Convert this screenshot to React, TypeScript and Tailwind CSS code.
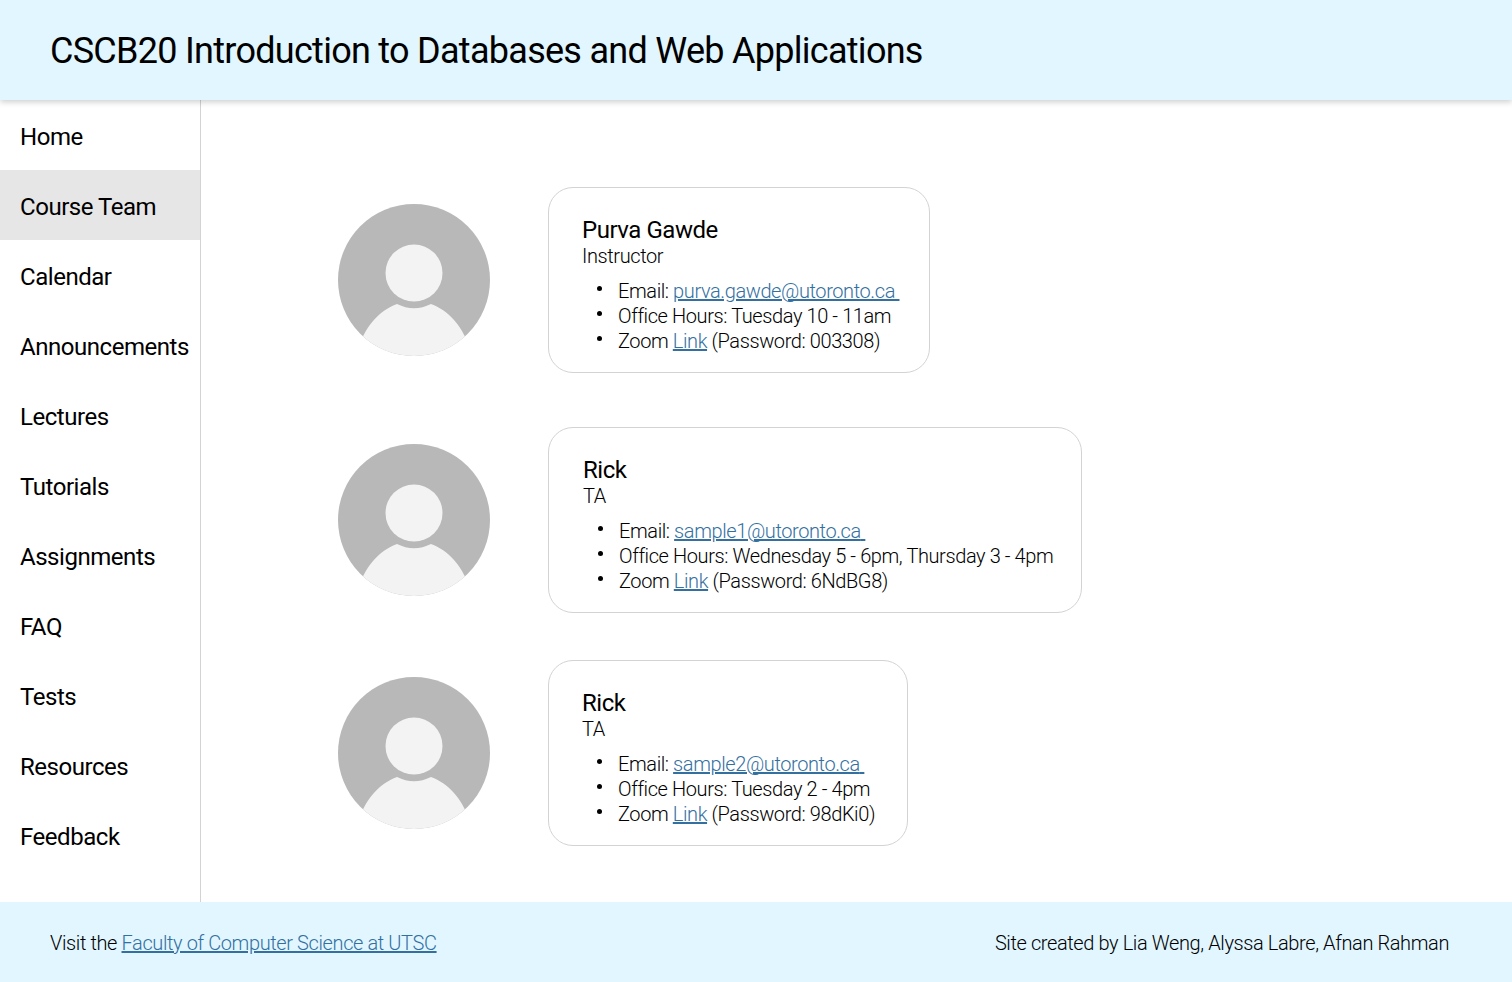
const navItems = [
  "Home",
  "Course Team",
  "Calendar",
  "Announcements",
  "Lectures",
  "Tutorials",
  "Assignments",
  "FAQ",
  "Tests",
  "Resources",
  "Feedback",
];

const team = [
  {
    name: "Purva Gawde",
    role: "Instructor",
    email: "purva.gawde@utoronto.ca",
    hours: "Tuesday 10 - 11am",
    password: "003308",
    rowClass: "mb-[54px]",
    cardClass: "w-[382px] pl-[33px]",
  },
  {
    name: "Rick",
    role: "TA",
    email: "sample1@utoronto.ca",
    hours: "Wednesday 5 - 6pm, Thursday 3 - 4pm",
    password: "6NdBG8",
    rowClass: "mb-[47px]",
    cardClass: "w-[534px] pl-[34px]",
  },
  {
    name: "Rick",
    role: "TA",
    email: "sample2@utoronto.ca",
    hours: "Tuesday 2 - 4pm",
    password: "98dKi0",
    rowClass: "",
    cardClass: "w-[360px] pl-[33px]",
  },
];

const Avatar = () => (
  <svg viewBox="0 0 152 152" className="w-[152px] h-[152px] shrink-0">
    <defs>
      <clipPath id="avatar-clip">
        <circle cx="76" cy="76" r="76" />
      </clipPath>
    </defs>
    <circle cx="76" cy="76" r="76" fill="#b8b8b8" />
    <g clipPath="url(#avatar-clip)" fill="#f3f3f3">
      <circle cx="76" cy="69" r="28.5" />
      <path d="M22 140 C28 122 42 106 59 100 Q76 108.5 93 100 C110 106 124 122 130 140 L130 152 L22 152 Z" />
    </g>
  </svg>
);

const Bullet = () => (
  <span className="w-[5px] h-[5px] rounded-full bg-black shrink-0 mt-[7px] ml-[15px] mr-[16px]" />
);

const App = () => {
  return (
    <div className="flex flex-col h-[982px] bg-white text-black font-['Roboto',sans-serif]">
      <header className="relative z-10 h-[100px] shrink-0 flex items-center pl-[50px] pt-[2px] bg-[#e1f6ff] shadow-[0_2px_6px_rgba(0,0,0,0.2)]">
        <h1 className="text-[36px] font-normal tracking-[-0.72px]">
          CSCB20 Introduction to Databases and Web Applications
        </h1>
      </header>

      <div className="flex flex-1 min-h-0">
        <nav className="w-[201px] shrink-0 border-r border-[#d3d3d3]">
          {navItems.map((item) => (
            <div
              key={item}
              className={`h-[70px] flex items-center pl-5 pt-[4px] text-[24px] tracking-[-0.46px] whitespace-nowrap ${
                item === "Course Team" ? "bg-[#e6e6e6]" : ""
              }`}
            >
              {item}
            </div>
          ))}
        </nav>

        <main className="flex-1 pt-[87px] pl-[137px]">
          {team.map((member) => (
            <div
              key={member.email}
              className={`flex items-center gap-[58px] ${member.rowClass}`}
            >
              <Avatar />
              <div
                className={`border border-[#d3d3d3] rounded-[25px] h-[186px] pt-[28px] ${member.cardClass}`}
              >
                <div className="text-[24px] leading-[28px] tracking-[-0.46px]">
                  {member.name}
                </div>
                <div className="text-[20px] leading-[25px] font-light tracking-[-0.4px]">
                  {member.role}
                </div>
                <ul className="mt-[10px] text-[20px] leading-[25px] font-light tracking-[-0.4px]">
                  <li className="flex">
                    <Bullet />
                    <span>
                      Email:{" "}
                      <a href="#" className="text-[#33709f] underline">
                        {member.email}{"\u00a0"}
                      </a>
                    </span>
                  </li>
                  <li className="flex">
                    <Bullet />
                    <span>Office Hours: {member.hours}</span>
                  </li>
                  <li className="flex">
                    <Bullet />
                    <span>
                      Zoom{" "}
                      <a href="#" className="text-[#33709f] underline">
                        Link
                      </a>{" "}
                      (Password: {member.password})
                    </span>
                  </li>
                </ul>
              </div>
            </div>
          ))}
        </main>
      </div>

      <footer className="h-[80px] shrink-0 flex items-center justify-between pl-[50px] pr-[63px] pt-[2px] bg-[#e1f6ff] text-[20px] font-light tracking-[-0.39px]">
        <div>
          Visit the{" "}
          <a href="#" className="text-[#33709f] underline">
            Faculty of Computer Science at UTSC
          </a>
        </div>
        <div>Site created by Lia Weng, Alyssa Labre, Afnan Rahman</div>
      </footer>
    </div>
  );
};

export default App;
